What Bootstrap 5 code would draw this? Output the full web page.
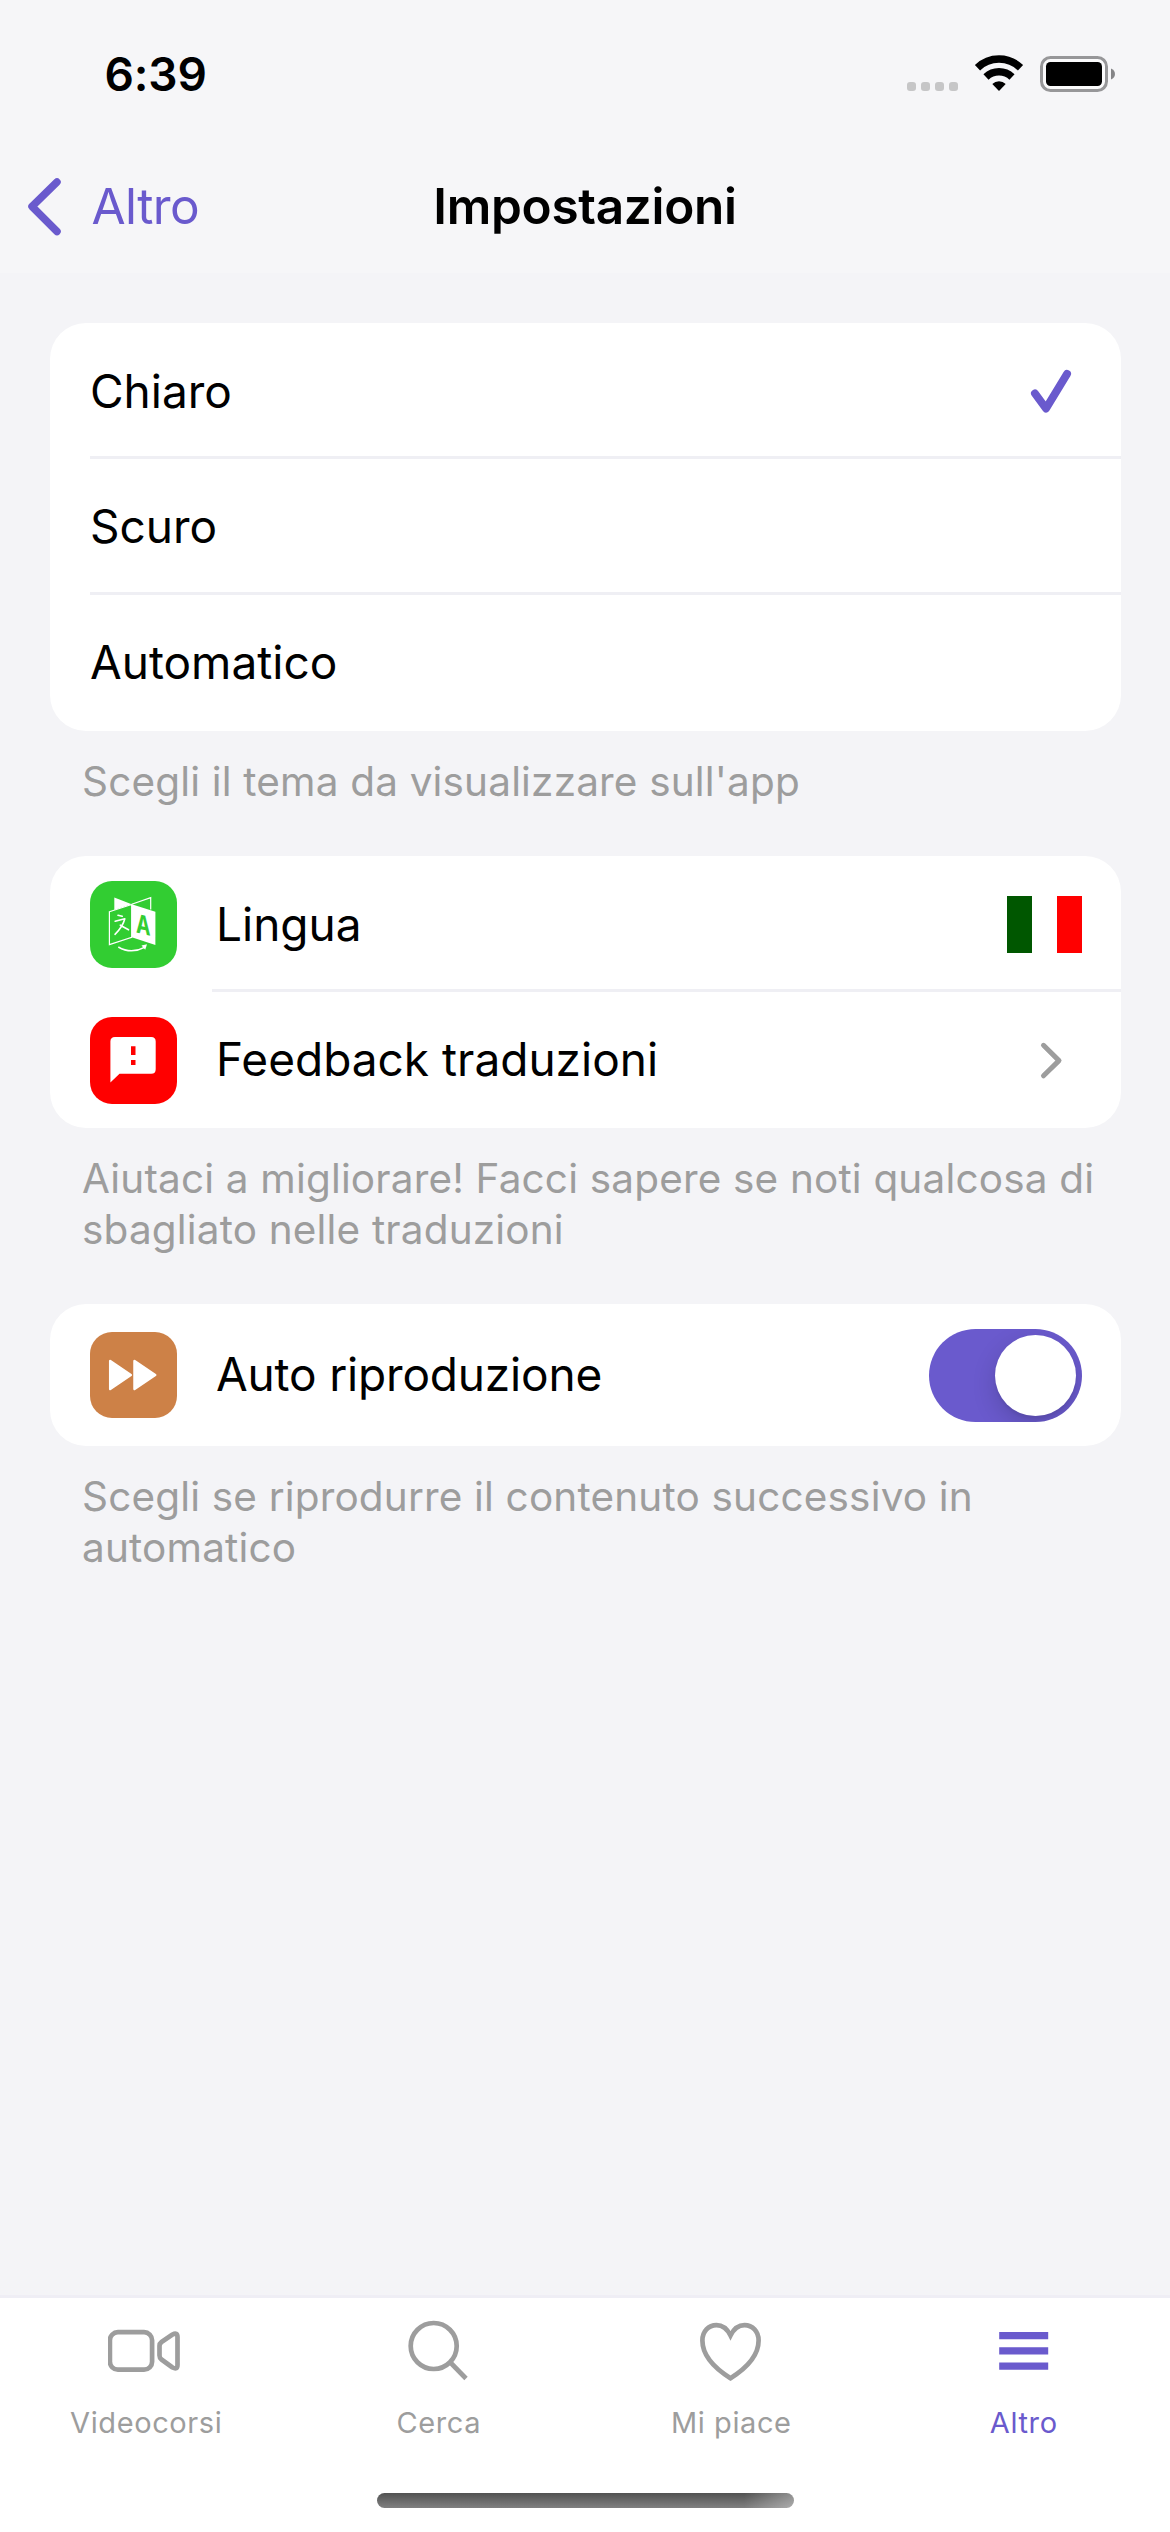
<!DOCTYPE html>
<html lang="it">
<head>
<meta charset="utf-8">
<meta name="viewport" content="width=device-width, initial-scale=1">
<title>Impostazioni</title>
<link href="https://cdn.jsdelivr.net/npm/bootstrap@5.3.0/dist/css/bootstrap.min.css" rel="stylesheet">
<style>
  :root { --violet: #6a5acd; --muted-ink: #9d9d9d; --line: #efeff4; }
  body { font-family: Inter, "Liberation Sans", sans-serif; background: #f4f4f7; color: #000; font-size: 46px; line-height: 1.2; }
  .screen { min-height: 2532px; }
  .top-area { background: #f6f6f8; height: 273px; }
  .status-bar { height: 141px; padding: 8px 54px 0 104.5px; }
  .clock { font-weight: 600; letter-spacing: -.15px; }
  .status-icons { width: 210px; height: 40px; margin-top: -2px; }
  .title-bar { height: 132px; font-size: 49.5px; }
  .back-link { color: var(--violet); padding-left: 26px; letter-spacing: -.59px; gap: 28.5px; }
  .page-title { font-size: 49.5px; font-weight: 600; letter-spacing: -.29px; line-height: 1.2; }
  main { padding: 50px 49px 0 50px; }
  .group-card { border-radius: 36px; overflow: hidden; }
  .group-card .list-group-item { border: 0; padding: 0 0 0 40px; color: #000; background: #fff; border-radius: 0; }
  .cell { height: 136px; padding-right: 40px; }
  .ruled { border-bottom: 3px solid var(--line); }
  .cell-first { padding-top: 5px; }
  .cell-second { padding-top: 3px; }
  .cell-tall { height: 136px; padding-top: 4px; }
  .cell-toggle { height: 142px; }
  .tile-slot { height: 133px; padding-top: 4px; }
  .tile { width: 87px; height: 87px; border-radius: 22px; margin-right: 35px; flex: none; }
  .tile svg { width: 87px; height: 87px; display: block; }
  .with-icon { padding-left: 4px; }
  .tile-green { background: #32cd32; }
  .tile-red { background: #f00; }
  .tile-orange { background: #cd8147; height: 86px; }
  .tight { letter-spacing: -.17px; }
  .hint { color: var(--muted-ink); font-size: 40.5px; line-height: 51px; letter-spacing: .17px; margin: 24.5px 0 49.5px 32px; }
  .toggle-track { width: 153px; height: 93px; border-radius: 47px; background: var(--violet); padding: 6px; overflow: hidden; margin: 1px -1px 0 0; }
  .toggle-knob { width: 81px; height: 81px; border-radius: 50%; background: #fff; box-shadow: 0 9px 24px rgba(0,0,0,.16), 0 3px 3px rgba(0,0,0,.06); }
  .flag { width: 75px; height: 57px; margin-right: -1px; }
  .tab-bar { background: #fff; border-top: 3px solid #efeef5; height: 237px; }
  .tab-link { color: var(--muted-ink); font-size: 29px; line-height: 36px; letter-spacing: .6px; padding: 14px 0 0; flex: 1 1 0; }
  .tab-link.active { color: var(--violet); }
  .tab-link svg { width: 76px; height: 76px; margin-bottom: 17px; }
  .home-indicator { width: 417px; height: 15px; border-radius: 8px; background: linear-gradient(90deg, rgba(255,255,255,0) 88%, rgba(255,255,255,.35)), linear-gradient(#525252, #808080); margin-bottom: 24px; }
</style>
<script src="https://cdn.jsdelivr.net/npm/bootstrap@5.3.0/dist/js/bootstrap.bundle.min.js"></script>
</head>
<body>
<div class="screen d-flex flex-column">
  <header class="top-area">
    <div class="status-bar d-flex align-items-center justify-content-between">
      <span class="clock">6:39</span>
      <svg class="status-icons" viewBox="0 0 210 40">
        <g fill="#c6c6c7"><rect x="1" y="28" width="9" height="9" rx="3"/><rect x="15" y="28" width="9" height="9" rx="3"/><rect x="29" y="28" width="9" height="9" rx="3"/><rect x="43" y="28" width="9" height="9" rx="3"/></g>
        <g fill="none" stroke="#000" stroke-width="7.5">
          <path d="M71.500 13.700a31 31 0 0 1 43 0"/><path d="M80 22.900a19 19 0 0 1 26 0"/>
        </g>
        <path d="M93 37l-6.700-7a9.700 9.700 0 0 1 13.400 0z"/>
        <rect x="135.500" y="3.500" width="65" height="33" rx="9" fill="#fff" fill-opacity=".6" stroke="#979799" stroke-width="3"/>
        <rect x="140" y="8" width="56" height="24" rx="4.500"/>
        <path d="M205 14.500c5.300 2 5.300 9 0 11z" fill="#858587"/>
      </svg>
    </div>
    <nav class="title-bar row g-0 align-items-center">
      <div class="col-4">
        <a href="#" class="back-link d-flex align-items-center text-decoration-none">
          <svg width="37" height="60" viewBox="0 0 37 60" fill="none" stroke="#6a5acd" stroke-width="7.500" stroke-linecap="round" stroke-linejoin="round"><path d="M31 5L6 29.500L31 54.500"/></svg>
          Altro
        </a>
      </div>
      <div class="col-4 text-center"><h1 class="page-title m-0">Impostazioni</h1></div>
    </nav>
  </header>

  <main class="flex-grow-1">
    <div class="list-group group-card">
      <div class="list-group-item">
        <div class="cell cell-first ruled d-flex align-items-center justify-content-between">
          <span>Chiaro</span>
          <svg width="60" height="60" viewBox="0 0 60 60" fill="none" stroke="#6a5acd" stroke-width="8" stroke-linecap="round" stroke-linejoin="round"><path d="M14 31.500L25 46.500L46 12"/></svg>
        </div>
      </div>
      <div class="list-group-item"><div class="cell cell-second ruled d-flex align-items-center"><span>Scuro</span></div></div>
      <div class="list-group-item"><div class="cell d-flex align-items-center"><span>Automatico</span></div></div>
    </div>
    <p class="hint">Scegli il tema da visualizzare sull'app</p>

    <div class="list-group group-card">
      <div class="list-group-item d-flex">
        <div class="tile-slot d-flex align-items-center"><span class="tile tile-green">
          <svg viewBox="0 0 87 87">
            <path d="M24.300 16.500L41.700 23.300L24.300 29z" fill="#fff"/>
            <path d="M41.700 23.300L60.700 16.700V28.500" fill="none" stroke="#fff" stroke-width="1.200"/>
            <path d="M19.400 30.800L41.700 23.500V56.300L19.400 63.600z" fill="#32cd32" stroke="#fff" stroke-width="1.200"/>
            <path d="M41.700 23.300L65.400 30.800V64L41.700 56.300z" fill="#fff"/>
            <text transform="matrix(.75 .17 0 1 46 51.500)" font-family="Inter, sans-serif" font-weight="700" font-size="26" fill="#32cd32">A</text>
            <path d="M28 34.200l4.200 1M25.200 40.300l9.600-2.500C33.500 43 29.500 49 25 53.300M30.300 44.200l8.200 4.600" fill="none" stroke="#fff" stroke-width="1.600" stroke-linecap="round" stroke-linejoin="round"/>
            <path d="M28.300 66Q41 73.500 54.500 66.300" fill="none" stroke="#fff" stroke-width="1.500"/>
            <path d="M51.500 64.500L57 63.300L55.200 68.800z" fill="#fff"/>
          </svg></span></div>
        <div class="cell cell-tall ruled with-icon flex-grow-1 d-flex align-items-center justify-content-between">
          <span>Lingua</span>
          <svg class="flag" viewBox="0 0 75 57"><path fill="#005700" d="M0 0h25v57H0z"/><path fill="#fff" d="M25 0h25v57H25z"/><path fill="#f00" d="M50 0h25v57H50z"/></svg>
        </div>
      </div>
      <div class="list-group-item d-flex align-items-center">
        <span class="tile tile-red"><svg viewBox="0 0 87 87"><path fill="#fff" d="M25 20h36.200q4.500 0 4.500 4.500v27.700q0 4.500-4.500 4.500H29.500L20.400 65.500V24.500Q20.400 20 25 20z"/><path fill="#f00" d="M41 29.300h4.500V38H41zM41 43h4.500v5H41z"/></svg></span>
        <div class="cell with-icon flex-grow-1 d-flex align-items-center justify-content-between">
          <span>Feedback traduzioni</span>
          <svg width="60" height="60" viewBox="0 0 60 60" fill="none" stroke="#9d9d9d" stroke-width="5" stroke-linecap="round" stroke-linejoin="round"><path d="M22.500 15.300L38 30.600L22.500 45.800"/></svg>
        </div>
      </div>
    </div>
    <p class="hint">Aiutaci a migliorare! Facci sapere se noti qualcosa di sbagliato nelle traduzioni</p>

    <div class="list-group group-card">
      <div class="list-group-item d-flex align-items-center">
        <span class="tile tile-orange"><svg viewBox="0 0 87 87" fill="#fff" stroke="#fff" stroke-width="2.500" stroke-linejoin="round"><path d="M20.200 29L40.800 43L20.200 57zM44.500 29L65.200 43L44.500 57z"/></svg></span>
        <div class="cell cell-toggle with-icon flex-grow-1 d-flex align-items-center justify-content-between">
          <span class="tight">Auto riproduzione</span>
          <span class="toggle-track d-flex justify-content-end" role="switch" aria-checked="true"><span class="toggle-knob"></span></span>
        </div>
      </div>
    </div>
    <p class="hint">Scegli se riprodurre il contenuto successivo in automatico</p>
  </main>

  <footer class="tab-bar d-flex flex-column align-items-center justify-content-between">
    <nav class="nav w-100 flex-nowrap">
      <a class="nav-link tab-link d-flex flex-column align-items-center" href="#">
        <svg viewBox="0 0 76 76" fill="none" stroke="#9d9d9d" stroke-width="4.700" stroke-linejoin="round"><rect x="1.900" y="20.200" width="42.200" height="37.500" rx="8"/><path d="M51.500 34Q51.500 31.500 53.500 30L64.500 22.500Q69.500 20 69.500 25V53Q69.500 58 64.500 55.500L53.500 47.500Q51.500 46 51.500 43.500z"/></svg>
        Videocorsi
      </a>
      <a class="nav-link tab-link d-flex flex-column align-items-center" href="#">
        <svg viewBox="0 0 76 76" fill="none" stroke="#9d9d9d" stroke-width="4.700"><circle cx="32.700" cy="34" r="23"/><path d="M48.900 50L65 66.500"/></svg>
        Cerca
      </a>
      <a class="nav-link tab-link d-flex flex-column align-items-center" href="#">
        <svg viewBox="0 0 76 76" fill="none" stroke="#9d9d9d" stroke-width="4.700"><path d="M37.500 23.500C34 16.500 29 13.200 23.500 13.200C15.500 13.200 9.400 19.500 9.400 28.500C9.400 43.500 20.500 55.500 37.500 66.200C54.500 55.500 65.600 43.500 65.600 28.500C65.600 19.500 59.500 13.200 51.500 13.200C46 13.200 41 16.500 37.500 23.500z"/></svg>
        Mi piace
      </a>
      <a class="nav-link tab-link active d-flex flex-column align-items-center" href="#">
        <svg viewBox="0 0 76 76" fill="#6a5acd"><path d="M13.200 20h49v7.200h-49zM13.200 35.200h49v7.300h-49zM13.200 50.500h49v7.300h-49z"/></svg>
        Altro
      </a>
    </nav>
    <div class="home-indicator"></div>
  </footer>
</div>
</body>
</html>
